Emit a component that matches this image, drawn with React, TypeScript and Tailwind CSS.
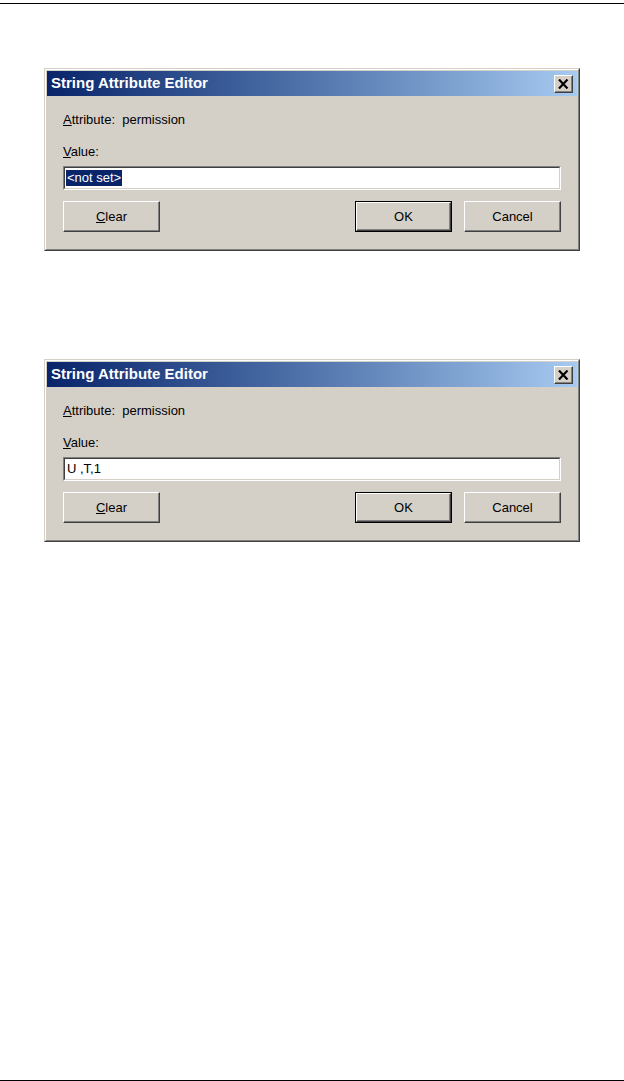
import React from "react";

const font = "font-['Liberation_Sans',Arial,sans-serif]";

const raised =
  "border border-t-[#ffffff] border-l-[#ffffff] border-r-[#404040] border-b-[#404040] shadow-[inset_-1px_-1px_0_#808080]";

const WinButton = ({
  children,
  isDefault,
}: {
  children: React.ReactNode;
  isDefault?: boolean;
}) => {
  if (isDefault) {
    return (
      <div className="h-[31px] w-[97px] border border-black">
        <div
          className={`flex h-full w-full items-center justify-center bg-[#d4d0c8] text-[13px] text-black ${raised}`}
        >
          {children}
        </div>
      </div>
    );
  }
  return (
    <div
      className={`flex h-[31px] w-[97px] items-center justify-center bg-[#d4d0c8] text-[13px] text-black ${raised}`}
    >
      {children}
    </div>
  );
};

const CloseBox = () => (
  <div
    className={`flex h-[18px] w-[19px] items-center justify-center bg-[#d4d0c8] ${raised}`}
  >
    <svg width="11" height="10" viewBox="0 0 11 10">
      <path d="M1 0.5 L9.5 9.5 M9.5 0.5 L1 9.5" stroke="#000" strokeWidth="2.2" />
    </svg>
  </div>
);

const Dialog = ({ value, selected }: { value: string; selected?: boolean }) => (
  <div
    className={`ml-[44px] w-[536px] bg-[#d4d0c8] border border-t-[#d4d0c8] border-l-[#d4d0c8] border-r-[#404040] border-b-[#404040] ${font}`}
  >
    <div className="border border-t-white border-l-white border-r-[#808080] border-b-[#808080] px-[1px] pt-[1px] pb-[17px]">
      <div className="flex h-[25px] items-center justify-between bg-gradient-to-r from-[#0a246a] to-[#a6caf0] pl-[4px] pr-[4px]">
        <span className="text-[15px] font-bold text-white">String Attribute Editor</span>
        <CloseBox />
      </div>

      <div className="px-[16px]">
        <div className="mt-[16px] text-[13px] leading-[16px] text-black">
          <span className="underline">A</span>ttribute:&nbsp; permission
        </div>
        <div className="mt-[16px] text-[13px] leading-[16px] text-black">
          <span className="underline">V</span>alue:
        </div>
        <div className="mt-[6px] h-[24px] border border-t-[#808080] border-l-[#808080] border-r-white border-b-white">
          <div className="flex h-full items-center border border-t-[#404040] border-l-[#404040] border-r-[#d4d0c8] border-b-[#d4d0c8] bg-white pl-[1px]">
            {selected ? (
              <span className="bg-[#0a246a] px-[1px] text-[13px] leading-[16px] text-white">
                {value}
              </span>
            ) : (
              <span className="px-[1px] text-[13px] leading-[16px] text-black">{value}</span>
            )}
          </div>
        </div>
        <div className="mt-[11px] flex items-center">
          <WinButton>
            <span>
              <span className="underline">C</span>lear
            </span>
          </WinButton>
          <div className="flex-1" />
          <div className="flex gap-[12px]">
            <WinButton isDefault>OK</WinButton>
            <WinButton>Cancel</WinButton>
          </div>
        </div>
      </div>
    </div>
  </div>
);

export default function App() {
  return (
    <div className="flex h-[1081px] w-[624px] flex-col bg-white">
      <div className="mt-[3px] h-px w-full bg-black" />
      <div className="mt-[64px]">
        <Dialog value="<not set>" selected />
      </div>
      <div className="mt-[108px]">
        <Dialog value="U ,T,1" />
      </div>
      <div className="flex-1" />
      <div className="h-px w-full bg-black" />
    </div>
  );
}
